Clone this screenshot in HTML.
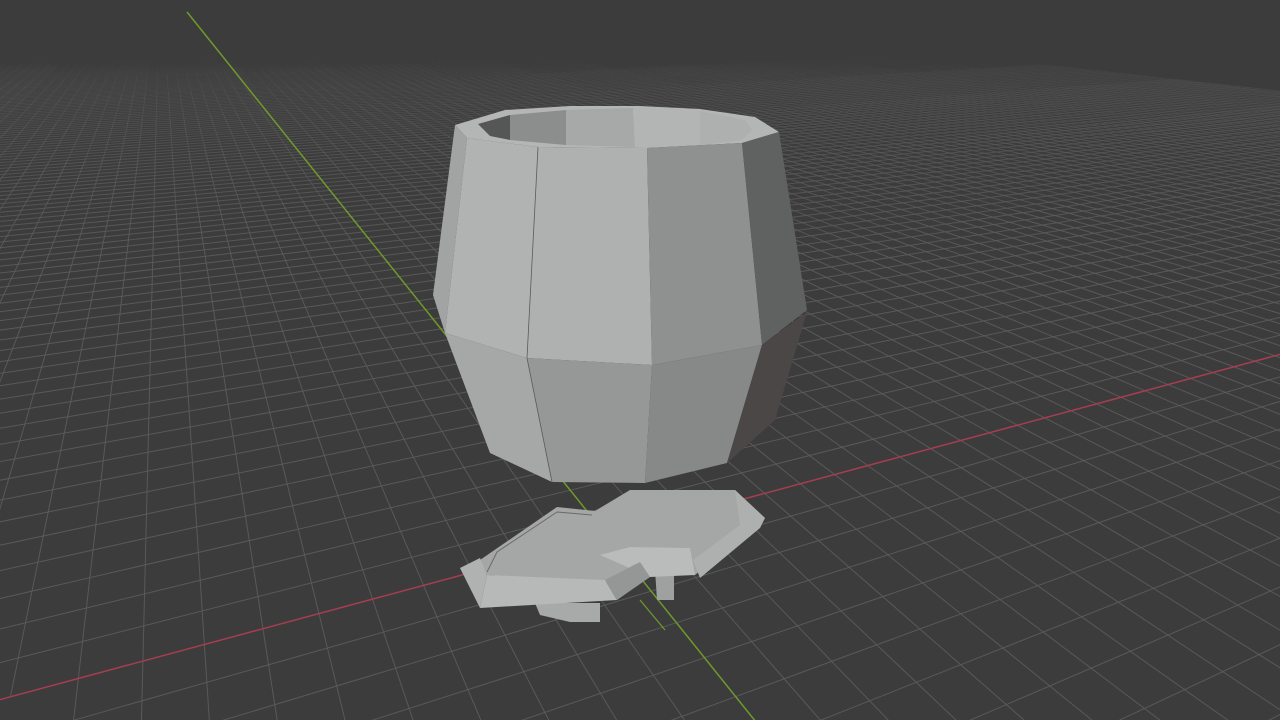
<!DOCTYPE html>
<html><head><meta charset="utf-8"><style>
html,body{margin:0;padding:0;background:#3b3b3b;overflow:hidden;width:1280px;height:720px}
svg{display:block}
</style></head><body>
<svg id="s" width="1280" height="720" viewBox="0 0 1280 720" xmlns="http://www.w3.org/2000/svg">
<rect width="1280" height="720" fill="#3c3c3c"/>
<g id="grid"></g>
<line x1="-20" y1="705" x2="1300" y2="349" stroke="#a53e50" stroke-width="1.5"/>
<line x1="187" y1="12" x2="760" y2="727" stroke="#6f9a2a" stroke-width="1.5"/>
<g id="cup" stroke-linejoin="round">
<polygon points="455,125 505,110 570,106 640,106 700,109 755,117 779,132 742,143 647,148 538,147 467,138" fill="#b4b5b5"/>
<polygon points="478,124 510,115 510,140 490,136" fill="#565656"/>
<polygon points="510,115 566,110 566,145 510,140" fill="#8c8d8d"/>
<polygon points="566,110 633,108 635,147 566,145" fill="#a7a8a8"/>
<polygon points="633,108 700,111 700,145 635,147" fill="#b3b4b4"/>
<polygon points="700,111 745,120 752,130 742,140 700,145" fill="#aeafaf"/>
<polygon points="455,125 467,138 445,333 433,295" fill="#a2a3a3"/>
<polygon points="467,138 538,147 527,358 445,333" fill="#b1b3b3"/>
<polygon points="538,147 647,148 652,365 527,358" fill="#afb1b1"/>
<polygon points="647,148 742,143 762,345 652,365" fill="#8f9090"/>
<polygon points="742,143 779,132 807,310 762,345" fill="#606161"/>
<polygon points="445,333 527,358 552,482 490,453" fill="#a6a7a7"/>
<polygon points="527,358 652,365 645,483 552,482" fill="#969797"/>
<polygon points="652,365 762,345 727,463 645,483" fill="#878888"/>
<polygon points="762,345 807,312 775,420 727,463" fill="#4b4747"/>
<polyline points="538,147 527,358 552,482" stroke="#5a5a5a" stroke-width="0.8" fill="none"/>
<polygon points="535,603 600,603 600,622 570,622 540,615" fill="#a8a9a9"/>
<polygon points="655,570 674,570 674,600 657,600" fill="#9fa0a0"/>
<polygon points="480,560 557,507 595,511 630,490 735,490 765,518 695,575 650,570 630,580 605,582 487,575" fill="#a5a6a6"/>
<polygon points="735,490 765,518 760,528 700,578 693,560 740,525" fill="#aeafaf"/>
<polyline points="487,572 497,552 557,512 592,515" stroke="#6a6a6a" stroke-width="1" fill="none"/>
<polygon points="460,568 480,558 487,575 480,608" fill="#b0b1b1"/>
<polygon points="487,575 605,580 617,600 480,608" fill="#b7b8b8"/>
<polygon points="600,555 630,547 690,548 695,575 650,577" fill="#babbbb"/>
<polygon points="605,580 640,562 650,577 617,600" fill="#959696"/>
<line x1="640" y1="600" x2="665" y2="630" stroke="#6f9a2a" stroke-width="1.2"/>
</g>
</svg>
<script>
(function(){
var O=[608,536],VX=[2727,-35],VY=[160,-35],a=0.02,b=0.044;
function P(u,v){var w=1+a*u+b*v;return [(a*u*VX[0]+b*v*VY[0]+O[0])/w,(a*u*VX[1]+b*v*VY[1]+O[1])/w,w];}
var h='';
function inV(p){return p[0]>-200&&p[0]<1500&&p[1]>-50&&p[1]<800;}
function seg(f,lo,hi){
 var n=24,prev=null;
 for(var i=0;i<=n;i++){
  var t=lo+(hi-lo)*i/n,p=f(t);
  if(p[2]<0.05){prev=null;continue;}
  if(prev&&(inV(prev)||inV(p))){var w=(prev[2]+p[2])/2;var op=Math.max(0,Math.min(0.9,(6-w)/4.5));
   if(op>0.03)h+='<line x1="'+prev[0].toFixed(1)+'" y1="'+prev[1].toFixed(1)+'" x2="'+p[0].toFixed(1)+'" y2="'+p[1].toFixed(1)+'" stroke="#5c5c5c" stroke-opacity="'+op.toFixed(2)+'" stroke-width="1"/>';}
  prev=p;
 }
}
for(var u=-150;u<=90;u++){ if(u==0)continue; (function(u){seg(function(v){return P(u,v);},-100,300);})(u);}
for(var v=-100;v<=300;v++){ if(v==0)continue; (function(v){seg(function(uu){return P(uu,v);},-150,90);})(v);}
document.getElementById('grid').innerHTML=h;
})();
</script>
</body></html>
